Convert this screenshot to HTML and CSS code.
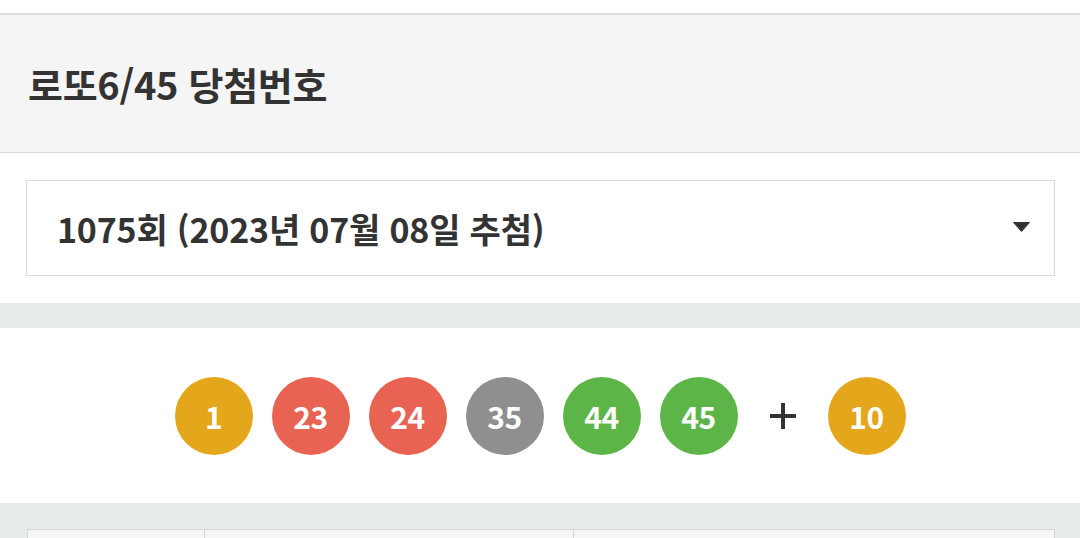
FILE: index.html
```html
<!DOCTYPE html>
<html lang="ko">
<head>
<meta charset="utf-8">
<link rel="stylesheet" href="styles.css">
</head>
<body>
<div class="page">
  <div class="top-gap"></div>
  <header class="header">
    <h1 class="title">로또6/45 당첨번호</h1>
  </header>
  <section class="select-wrap">
    <div class="select">
      <span class="select-text">1075회 (2023년 07월 08일 추첨)</span>
      <svg class="caret" width="17" height="10" viewBox="0 0 17 10"><path d="M0.5 0.5 H16.5 L8.5 9.5 Z" fill="#333" stroke="#333" stroke-linejoin="round"/></svg>
    </div>
  </section>
  <div class="band"></div>
  <section class="balls">
    <span class="ball yellow">1</span>
    <span class="ball red">23</span>
    <span class="ball red">24</span>
    <span class="ball gray">35</span>
    <span class="ball green">44</span>
    <span class="ball green">45</span>
    <span class="plus"><svg width="26" height="26" viewBox="0 0 26 26"><path d="M13 0 V26 M0 13 H26" stroke="#333" stroke-width="4"/></svg></span>
    <span class="ball yellow">10</span>
  </section>
  <section class="table-wrap">
    <div class="table">
      <div class="cell c1"></div>
      <div class="cell c2"></div>
      <div class="cell c3"></div>
    </div>
  </section>
</div>
</body>
</html>
```
FILE: styles.css
```css
html, body {
  margin: 0;
  padding: 0;
  background: #fff;
  font-family: "Noto Sans CJK KR", "Noto Sans", sans-serif;
  color: #333;
  overflow: hidden;
}
.page {
  width: 1080px;
  height: 538px;
  overflow: hidden;
}
.top-gap {
  height: 13px;
  background: #fff;
}
.header {
  height: 137px;
  background: #f5f5f5;
  border-top: 2px solid #dcdcdc;
  border-bottom: 1px solid #dcdcdc;
  display: flex;
  align-items: center;
  padding-left: 28px;
}
.title {
  margin: 0;
  font-size: 38px;
  font-weight: 700;
  color: #333;
  letter-spacing: -0.3px;
}
.select-wrap {
  padding: 27px 25px 27px 26px;
  background: #fff;
}
.select {
  height: 94px;
  border: 1px solid #d9d9d9;
  display: flex;
  align-items: center;
  justify-content: space-between;
  padding: 0 24px 0 30px;
}
.select-text {
  font-size: 34px;
  font-weight: 700;
  color: #333;
  letter-spacing: -0.2px;
}
.caret {
  display: block;
  margin-top: -2px;
}
.band {
  height: 25px;
  background: #e8ebec;
}
.balls {
  height: 175px;
  display: flex;
  align-items: center;
  justify-content: center;
  gap: 19px;
  background: #fff;
}
.ball {
  width: 78px;
  height: 78px;
  border-radius: 50%;
  display: flex;
  align-items: center;
  justify-content: center;
  color: #fff;
  font-size: 30px;
  font-weight: 700;
  letter-spacing: -0.5px;
}
.yellow { background: #e4a71b; }
.red { background: #e86352; }
.gray { background: #8f8f8f; }
.green { background: #5db547; }
.plus {
  width: 52px;
  display: flex;
  justify-content: center;
}
.plus svg { display: block; }
.table-wrap {
  height: 35px;
  background: #e8ebec;
  padding: 26px 25px 0 27px;
  box-sizing: border-box;
}
.table {
  display: grid;
  grid-template-columns: 177px 369px 1fr;
  height: 20px;
  background: #f6f6f6;
  border-top: 1px solid #d6d6d6;
  border-left: 1px solid #d6d6d6;
  border-right: 1px solid #d6d6d6;
}
.cell {
  border-right: 1px solid #d6d6d6;
}
.cell.c3 { border-right: none; }
```
